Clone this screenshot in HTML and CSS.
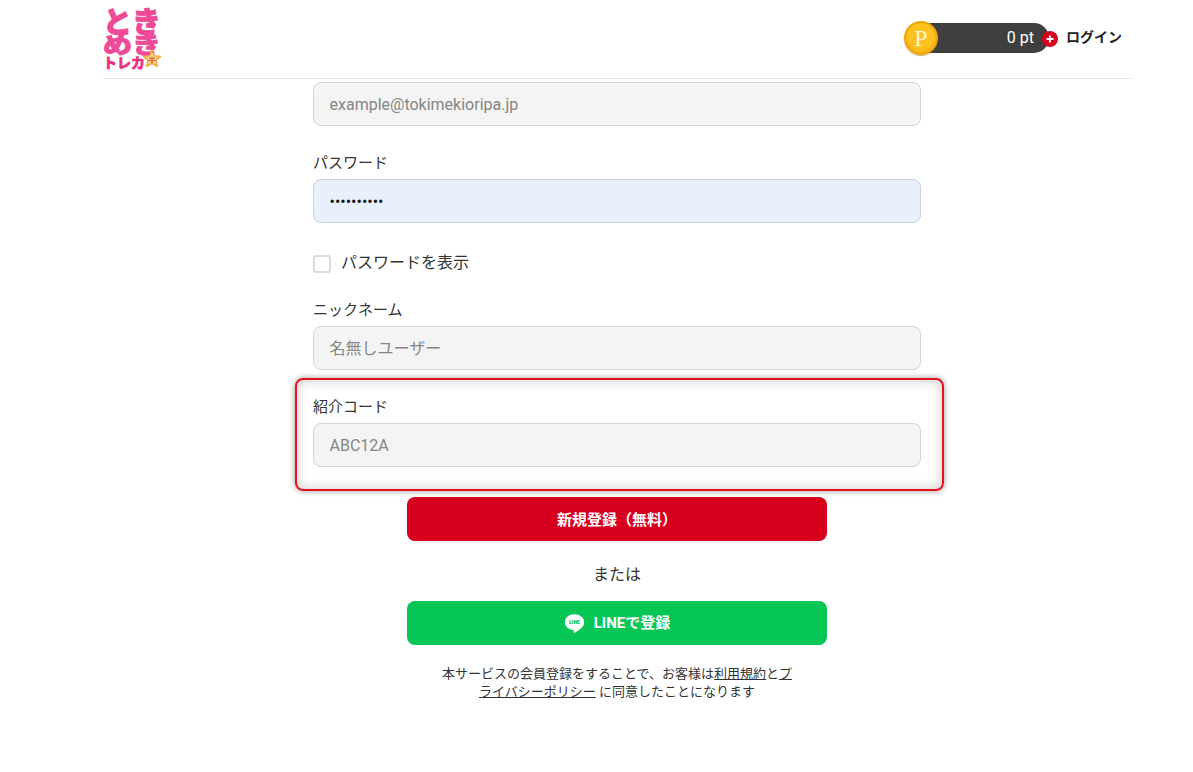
FILE: index.html
```html
<!DOCTYPE html>
<html lang="ja">
<head>
<meta charset="utf-8">
<title>新規登録</title>
<link rel="stylesheet" href="styles.css">
</head>
<body>
<header class="header">
  <a class="logo" href="#">
    <span class="logo-row">とき</span>
    <span class="logo-row logo-row-low">めき</span>
    <span class="logo-sub">トレカ</span>
    <svg class="logo-star" viewBox="0 0 24 24"><path d="M12 1.500l3 6.600 7.200.8-5.300 4.900 1.500 7.100-6.400-3.600-6.400 3.600 1.500-7.100L1.800 8.900 9 8.100z" fill="#fbd38a" stroke="#f0a030" stroke-width="1.500" stroke-linejoin="round"/><path d="M8 11h8M8 14h8M12 9v8" stroke="#d9703a" stroke-width="1.500"/></svg>
  </a>
  <div class="header-right">
    <div class="points">
      <span class="coin"><span class="coin-p">P</span></span>
      <span class="points-bar">0 pt</span>
      <span class="plus">
        <svg viewBox="0 0 10 10" class="plus-icon"><path d="M5 1.500v7M1.500 5h7" stroke="#fff" stroke-width="1.800"/></svg>
      </span>
    </div>
    <a class="login" href="#">ログイン</a>
  </div>
</header>

<main class="form">
  <div class="field">
    <input class="input" type="text" placeholder="example@tokimekioripa.jp">
  </div>
  <div class="field field-password">
    <label class="label">パスワード</label>
    <input class="input input-filled" type="password" value="abcdefghij">
  </div>
  <label class="show-password">
    <span class="checkbox"></span>
    <span class="show-text">パスワードを表示</span>
  </label>
  <div class="field field-nick">
    <label class="label">ニックネーム</label>
    <input class="input" type="text" placeholder="名無しユーザー">
  </div>
  <div class="highlight">
    <label class="label">紹介コード</label>
    <input class="input" type="text" placeholder="ABC12A">
  </div>
  <div class="actions">
    <button class="btn btn-red" type="button">新規登録（無料）</button>
    <p class="or">または</p>
    <button class="btn btn-green" type="button">
      <svg class="line-icon" viewBox="0 0 24 24"><path d="M12 1.500C5.900 1.500 1 5.500 1 10.500c0 4.500 3.900 8.200 9.200 8.900.4.100.9.300 1 .6.100.3.100.7 0 1l-.1 1c0 .3-.2 1.100 1 .6 1.200-.5 6.300-3.700 8.600-6.300 1.500-1.700 2.300-3.600 2.300-5.800C23 5.500 18.100 1.500 12 1.500z" fill="#fff"/><text x="12" y="13" class="line-text">LINE</text></svg>
      <span class="line-label">LINEで登録</span>
    </button>
    <p class="legal">本サービスの会員登録をすることで、お客様は<a href="#">利用規約</a>と<a href="#">プライバシーポリシー</a> に同意したことになります</p>
  </div>
</main>
</body>
</html>
```
FILE: styles.css
```css
* { box-sizing: border-box; }
html, body { margin: 0; padding: 0; height: 772px; overflow: hidden; background: #fff; }
body {
  font-family: Roboto, "Noto Sans CJK JP", sans-serif;
  color: #333;
  font-size: 16px;
}
a { color: inherit; }

.header {
  width: 1029px;
  height: 79px;
  margin-left: 103px;
  border-bottom: 1px solid #e8e8e8;
  display: flex;
  justify-content: space-between;
  align-items: flex-start;
}
.logo {
  position: relative;
  display: flex;
  flex-direction: column;
  width: 60px;
  padding-top: 8px;
  text-decoration: none;
  color: #ee4a98;
  font-family: "Noto Sans CJK JP", sans-serif;
  font-weight: 900;
}
.logo-row {
  display: block;
  font-size: 29px; line-height: 25px; height: 25px; white-space: nowrap;
  -webkit-text-stroke: 1px #ee4a98;
}
.logo-row-low { transform: scaleY(.78); transform-origin: 0 0; height: 21px; }
.logo-sub {
  display: block; font-size: 14px; line-height: 11px; color: #e8327f; margin-top: 3px;
  -webkit-text-stroke: .5px #e8327f; white-space: nowrap;
}
.logo-star { position: absolute; left: 39px; top: 49px; width: 20px; height: 20px; }

.header-right { display: flex; align-items: center; margin-top: 20px; padding-right: 10px; }
.points { display: flex; align-items: center; position: relative; width: 155px; height: 36px; }
.coin {
  width: 34px; height: 34px; border-radius: 50%;
  background: radial-gradient(circle at 50% 45%, #fcc21e 0 55%, #f8ae10 75%, #eea20c 100%);
  border: 2px solid #eda60e;
  box-shadow: 0 1px 1px rgba(160,100,0,.5);
  display: flex; align-items: center; justify-content: center;
  position: relative; z-index: 1; flex: none;
}
.coin-p { font-family: "Liberation Serif", serif; font-size: 24px; line-height: 1; color: #fff3cc; }
.points-bar {
  width: 121px; height: 30px; margin-left: -10px;
  background: #3f3f3f; border-radius: 0 15px 15px 0;
  color: #fff; font-size: 16px; line-height: 30px; text-align: right;
  padding-right: 15px; flex: none;
}
.plus {
  width: 16px; height: 16px; border-radius: 50%; background: #d7001f;
  display: flex; align-items: center; justify-content: center;
  position: absolute; left: 138px; top: 11px;
}
.plus-icon { width: 10px; height: 10px; }
.login { font-size: 14px; font-weight: 700; color: #222; text-decoration: none; margin-left: 7px; line-height: 20px; position: relative; top: -1px; }

.form { width: 608px; margin: 3px 0 0 313px; }
.label { display: block; font-size: 15px; line-height: 24px; height: 24px; padding-top: 1px; margin-bottom: 5px; color: #333; }
.input {
  display: block; width: 100%; height: 44px;
  border: 1px solid #d4d4d4; border-radius: 8px;
  background: #f4f4f4; padding: 0 16px 0 15.500px;
  font: 16px Roboto, "Noto Sans CJK JP", sans-serif; color: #111; outline: none;
}
.input::placeholder { color: #858585; opacity: 1; }
.input-filled { background: #e8f0fe; border-color: #ccd3de; font-size: 16px; }

.field-password { margin-top: 24px; }
.show-password { display: flex; align-items: center; gap: 10px; margin-top: 32px; height: 18px; font-size: 16px; color: #333; }
.show-text { position: relative; top: -3px; }
.checkbox { width: 18px; height: 18px; border: 2px solid #dcdcdc; border-radius: 3px; background: #fff; flex: none; }
.field-nick { margin-top: 24px; }

.highlight {
  margin: 8px -23px 0 -18px;
  padding: 14px 21px 22px 16px;
  border: 2px solid #e8101f;
  border-radius: 8px;
  box-shadow: 0 0 6px rgba(0,0,0,.4), inset 0 0 12px rgba(0,0,0,.22);
}

.actions { width: 420px; margin: 6px 0 0 94px; display: flex; flex-direction: column; align-items: center; }
.btn {
  display: flex; align-items: center; justify-content: center; gap: 8px;
  width: 100%; height: 44px; border: 0; border-radius: 8px; color: #fff;
  padding: 0 0 2px;
  font: 700 15px Roboto, "Noto Sans CJK JP", sans-serif;
}
.btn-red { background: #d7001f; }
.btn-green { background: #06c755; padding-bottom: 4px; }
.or { margin: 22px 0 14px; font-size: 16px; line-height: 24px; color: #333; }
.line-icon { width: 21px; height: 21px; margin: 5px 0 0 0; }
.line-label { margin-left: 1px; }
.line-text { font: 900 6px Roboto, sans-serif; fill: #06c755; text-anchor: middle; }
.legal { margin: 20px 0 0; width: 360px; font-size: 13px; line-height: 18px; text-align: center; color: #333; }
```
